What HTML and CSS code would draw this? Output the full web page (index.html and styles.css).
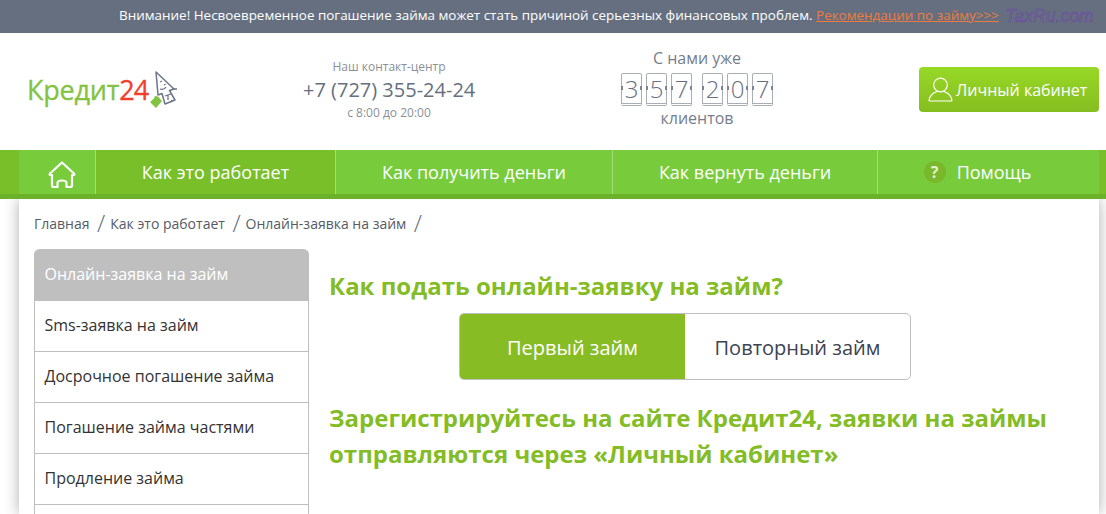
FILE: index.html
```html
<!DOCTYPE html>
<html lang="ru">
<head>
    <meta charset="UTF-8">
    <meta name="viewport" content="width=device-width, initial-scale=1.0">
    <title>Кредит24</title>
    <link rel="stylesheet" href="styles.css">
</head>
<body>
    <div class="top-notice">
        <span class="notice-text">Внимание! Несвоевременное погашение займа может стать причиной серьезных финансовых проблем.</span>
        <a class="notice-link" href="#">Рекомендации по займу&gt;&gt;&gt;</a>
        <span class="notice-mark">TaxRu.com</span>
    </div>

    <header class="site-header">
        <a class="logo" href="#">
            <span class="logo-word">Кредит</span><span class="logo-num">24</span>
            <svg class="logo-pic" width="28" height="38" viewBox="0 0 28 38">
                <path d="M6 1 L24 18 L19.500 19.500 L25 29 L15 33 L12 22.500 L8 24 Z" fill="#fff" stroke="#6b7488" stroke-width="1.500" stroke-linejoin="round"/>
                <path d="M10 11 l2 -1 M14 14 l1.500 -1 M10 18 q4 1.500 6 -2 M22 18 h5 M15 25 l6 -2 M18 24 v5 M21 31 l1 -2" fill="none" stroke="#6b7488" stroke-width="1.300"/>
                <path d="M0 31 L4 27.500 L5 25 L8 25.500 L12 30 L6 37 Z" fill="#82c341"/>
            </svg>
        </a>
        <div class="contact">
            <div class="contact-label">Наш контакт-центр</div>
            <div class="contact-phone">+7 (727) 355-24-24</div>
            <div class="contact-hours">с 8:00 до 20:00</div>
        </div>
        <div class="counter">
            <div class="counter-label">С нами уже</div>
            <div class="counter-digits">
                <span class="digit">3</span><span class="digit">5</span><span class="digit">7</span>
                <span class="digit digit-gap">2</span><span class="digit">0</span><span class="digit">7</span>
            </div>
            <div class="counter-bottom">клиентов</div>
        </div>
        <a class="cabinet-btn" href="#">
            <svg width="25" height="25" viewBox="0 0 25 25">
                <circle cx="12.500" cy="8" r="6.800" fill="none" stroke="#fff" stroke-width="1.200"/>
                <path d="M1 24 C1.500 18 6 15.500 9 14.500 M24 24 C23.500 18 19 15.500 16 14.500 M1 24 H24" fill="none" stroke="#fff" stroke-width="1.200"/>
            </svg>
            <span>Личный кабинет</span>
        </a>
    </header>

    <nav class="main-nav">
        <div class="nav-inner">
            <a class="nav-home" href="#">
                <svg width="28" height="27" viewBox="0 0 28 27">
                    <path d="M14 1.500 L26 12.500 Q27 14 25.500 14 H24 V24.500 Q24 26 22.500 26 H18.500 V22 Q18.500 19.500 14 19.500 Q9.500 19.500 9.500 22 V26 H5.500 Q4 26 4 24.500 V14 H2.500 Q1 14 2 12.500 Z" fill="none" stroke="#fff" stroke-width="2.200" stroke-linejoin="round"/>
                </svg>
            </a>
            <a class="nav-item nav-active nav-w1" href="#">Как это работает</a>
            <a class="nav-item nav-w2" href="#">Как получить деньги</a>
            <a class="nav-item nav-w3" href="#">Как вернуть деньги</a>
            <a class="nav-item nav-help" href="#"><span class="help-icon">?</span>Помощь</a>
        </div>
    </nav>

    <main class="page">
        <div class="breadcrumbs">
            <a href="#">Главная</a><span class="sep">/</span>
            <a href="#">Как это работает</a><span class="sep">/</span>
            <a href="#">Онлайн-заявка на займ</a><span class="sep">/</span>
        </div>
        <div class="columns">
            <ul class="side-menu">
                <li class="side-active">Онлайн-заявка на займ</li>
                <li>Sms-заявка на займ</li>
                <li>Досрочное погашение займа</li>
                <li>Погашение займа частями</li>
                <li>Продление займа</li>
                <li></li>
            </ul>
            <div class="content">
                <h2 class="title">Как подать онлайн-заявку на займ?</h2>
                <div class="tabs">
                    <a class="tab tab-on" href="#">Первый займ</a>
                    <a class="tab" href="#">Повторный займ</a>
                </div>
                <h2 class="title title-two">Зарегистрируйтесь на сайте Кредит24, заявки на займы отправляются через «Личный кабинет»</h2>
            </div>
        </div>
    </main>
</body>
</html>
```

FILE: styles.css
```css
* {
    box-sizing: border-box;
}
html, body {
    height: 514px;
    overflow: hidden;
}
body {
    margin: 0;
    font-family: "Open Sans", "Noto Sans", sans-serif;
    background-color: #fff;
    color: #333;
}
a {
    text-decoration: none;
    color: inherit;
}

.top-notice {
    height: 33px;
    background-color: #656f80;
    color: #fff;
    font-size: 13.45px;
    line-height: 31px;
    padding-left: 119px;
    white-space: nowrap;
    overflow: hidden;
}
.notice-link {
    color: #ee7b3c;
    text-decoration: underline;
}
.notice-mark {
    font-family: "Liberation Sans", sans-serif;
    font-style: italic;
    font-size: 17.6px;
    line-height: 18px;
    color: #656f80;
    -webkit-text-stroke: 0.5px #6f45ab;
    margin-left: 3px;
    vertical-align: -2px;
}

.site-header {
    height: 117px;
    display: flex;
    position: relative;
}
.logo {
    width: 177px;
    margin-left: 27px;
    display: flex;
    align-items: center;
    height: 112px;
    font-size: 27px;
    letter-spacing: -0.2px;
    -webkit-text-stroke: 0.3px;
}
.logo-word {
    color: #82c341;
}
.logo-num {
    color: #f0402b;
    letter-spacing: -1px;
}
.logo-pic {
    margin-left: 2px;
    margin-top: 2px;
    flex: none;
}
.contact {
    width: 172px;
    margin-left: 99px;
    padding-top: 25px;
    text-align: center;
    white-space: nowrap;
    color: #656f80;
}
.contact-label {
    font-size: 12px;
    line-height: 17px;
    color: #8b8f96;
}
.contact-phone {
    font-size: 20px;
    line-height: 29px;
}
.contact-hours {
    font-size: 12px;
    line-height: 17px;
    color: #8b8f96;
}
.counter {
    width: 156px;
    margin-left: 144px;
    padding-top: 14px;
    text-align: center;
    color: #757d8c;
    font-size: 16px;
}
.counter-label {
    line-height: 22px;
}
.counter-digits {
    display: flex;
    justify-content: center;
    height: 34px;
    margin-top: 4px;
}
.counter-bottom {
    line-height: 22px;
}
.digit {
    flex: none;
    width: 21px;
    height: 33px;
    margin-right: 4px;
    border: 1px solid #a9adb6;
    border-bottom: 3px double #a9adb6;
    border-radius: 2px;
    color: #656f80;
    font-size: 24px;
    font-weight: 300;
    line-height: 29px;
    text-align: center;
    position: relative;
}
.digit:last-child {
    margin-right: 0;
}
.digit-gap {
    margin-left: 6px;
}
.digit::before,
.digit::after {
    content: "";
    position: absolute;
    top: 12px;
    width: 2px;
    height: 4px;
    background-color: #7c8494;
}
.digit::before {
    left: -1px;
}
.digit::after {
    right: -1px;
}
.cabinet-btn {
    position: absolute;
    left: 919px;
    top: 34px;
    width: 180px;
    height: 45px;
    display: flex;
    align-items: center;
    gap: 3px;
    padding-left: 9px;
    border-radius: 4px;
    background: linear-gradient(#98d927, #85bd20);
    color: #fff;
    font-size: 16px;
    white-space: nowrap;
}

.main-nav {
    height: 49px;
    background-color: #79bf2a;
    border-bottom: 5px solid #6cb12a;
}
.nav-inner {
    width: 1080px;
    height: 44px;
    margin-left: 19px;
    display: flex;
    background-color: #78cc3c;
    color: #fff;
    font-size: 18px;
}
.nav-home {
    width: 77px;
    flex: none;
    display: flex;
    align-items: center;
    justify-content: center;
    padding-top: 4px;
    padding-left: 9px;
    border-right: 1px solid #a4de75;
}
.nav-item {
    display: flex;
    align-items: center;
    justify-content: center;
    border-right: 1px solid #a4de75;
    white-space: nowrap;
    padding-bottom: 1px;
}
.nav-w1 {
    width: 240px;
}
.nav-w2 {
    width: 277px;
}
.nav-w3 {
    width: 265px;
}
.nav-help {
    flex: 1;
    border-right: 0;
    gap: 11px;
    padding-right: 22px;
}
.nav-active {
    background-color: #79bf2a;
}
.help-icon {
    width: 22px;
    height: 22px;
    border-radius: 50%;
    background-color: #79b82a;
    color: #e4f0c8;
    font-size: 16px;
    font-weight: 700;
    line-height: 22px;
    text-align: center;
}

.page {
    width: 1080px;
    height: 315px;
    margin-left: 19px;
    padding: 0 15px;
    background-color: #fff;
    box-shadow: 0 0 14px rgba(0, 0, 0, 0.32);
    clip-path: inset(0 -20px 0 -20px);
}
.breadcrumbs {
    height: 50px;
    display: flex;
    align-items: center;
    padding-bottom: 2px;
    font-size: 14px;
    color: #555b66;
    white-space: nowrap;
}
.sep {
    font-size: 24px;
    line-height: 24px;
    margin: 0 5px 0 7.5px;
    color: #656f80;
    font-weight: 300;
}
.columns {
    display: flex;
}
.side-menu {
    width: 275px;
    flex: none;
    margin: 0;
    padding: 0;
    list-style: none;
    border: 1px solid #bfbfbf;
    border-top: 0;
    border-radius: 6px 6px 0 0;
}
.side-menu li {
    height: 51px;
    padding-left: 9.5px;
    line-height: 48px;
    font-size: 16px;
    color: #333;
    border-bottom: 1px solid #bfbfbf;
}
.side-menu .side-active {
    height: 52px;
    margin: 0 -1px;
    padding-left: 10.5px;
    line-height: 50px;
    background-color: #bfbfbf;
    color: #fff;
    border-radius: 6px 6px 0 0;
}
.content {
    flex: 1;
    padding: 19px 0 0 20px;
}
.title {
    margin: 0;
    font-size: 24px;
    font-weight: 700;
    line-height: 36px;
    color: #84bc25;
}
.title-two {
    width: 740px;
    margin-top: 20px;
}
.tabs {
    display: flex;
    width: 452px;
    height: 67px;
    margin: 9px 0 0 130px;
    border: 1px solid #bfbfbf;
    border-radius: 5px;
    overflow: hidden;
}
.tab {
    flex: 1;
    font-size: 20px;
    line-height: 68px;
    text-align: center;
    color: #3c4352;
}
.tab-on {
    background-color: #88bc24;
    color: #fff;
}
```
